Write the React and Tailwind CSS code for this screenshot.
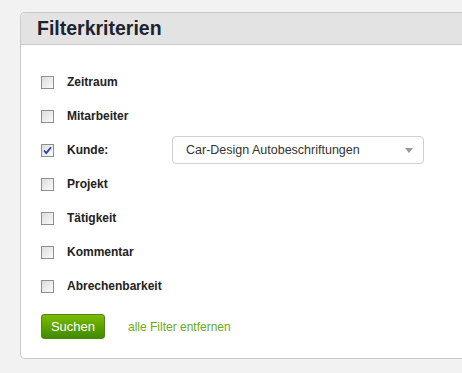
import React from 'react'

const filters = [
  { label: 'Zeitraum' },
  { label: 'Mitarbeiter' },
  { label: 'Kunde:', checked: true, value: 'Car-Design Autobeschriftungen' },
  { label: 'Projekt' },
  { label: 'Tätigkeit' },
  { label: 'Kommentar' },
  { label: 'Abrechenbarkeit' },
]

// alter Windows-Checkbox-Look
function Box({ checked }) {
  return (
    <span className="relative flex h-[13px] w-[13px] items-center justify-center border border-[#8f8f8f] bg-gradient-to-br from-[#dcdcdc] to-[#fbfbfb]">
      {checked && (
        <svg width="9" height="9" viewBox="0 0 9 9" className="absolute">
          <path d="M1 4.5 L3.3 7 L8 1.2" fill="none" stroke="#2c3fb0" strokeWidth="1.8" />
        </svg>
      )}
    </span>
  )
}

export default function App() {
  return (
    <div className="min-h-[373px] w-[462px] overflow-hidden bg-[#f2f2f2] pt-[12px] pl-[20px] font-['Liberation_Sans',Arial,sans-serif]">
      <div className="rounded-l-[5px] border border-r-0 border-[#c9c9c9] bg-white">
        <div className="flex h-[32px] items-center rounded-tl-[5px] border-b border-[#cbcbcb] bg-[#e3e3e3] pl-[16px]">
          <h2 className="text-[19.5px] font-bold text-[#1b2430]">Filterkriterien</h2>
        </div>

        <div className="pt-[20px] pb-[19px] pl-[20px]">
          {filters.map((f) => (
            <div key={f.label} className="flex h-[34px] items-center">
              <Box checked={f.checked} />
              <span className="ml-[13px] w-[118px] text-[12px] font-bold text-[#222]">{f.label}</span>
              {f.value && (
                <div className="ml-[-13px] flex h-[28px] w-[252px] items-center justify-between rounded-[4px] border border-[#d0d0d0] bg-white pr-[10px] pl-[13px]">
                  <span className="text-[12.5px] text-[#333]">{f.value}</span>
                  <svg width="8" height="5" viewBox="0 0 8 5">
                    <path d="M0 0 H8 L4 5 Z" fill="#999" />
                  </svg>
                </div>
              )}
            </div>
          ))}

          <div className="mt-[11px] flex items-center">
            <button className="h-[25px] w-[64px] rounded-[3px] border border-[#4a8a0e] bg-gradient-to-b from-[#7dbb00] to-[#3f8a00] text-[13px] text-white">
              Suchen
            </button>
            <a className="ml-[23px] text-[12px] text-[#6aab17]">alle Filter entfernen</a>
          </div>
        </div>
      </div>
    </div>
  )
}
